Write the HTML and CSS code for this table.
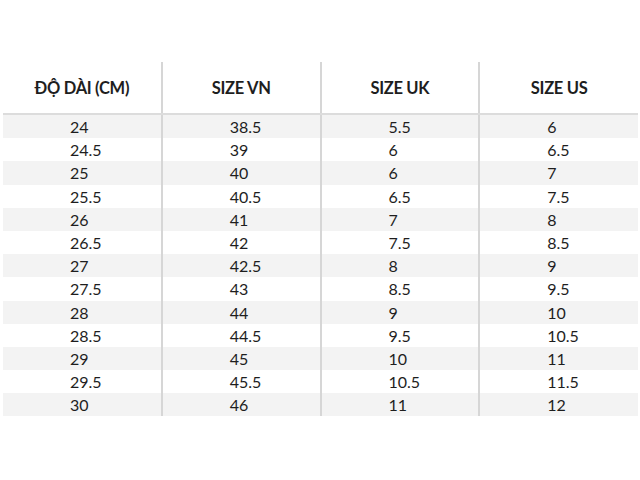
FILE: index.html
```html
<!DOCTYPE html>
<html lang="vi">
<head>
<meta charset="utf-8">
<link rel="stylesheet" href="styles.css">
</head>
<body>
<div class="wrap">
<table class="size-table">
  <thead>
    <tr><th>ĐỘ DÀI (CM)</th><th>SIZE VN</th><th>SIZE UK</th><th>SIZE US</th></tr>
  </thead>
  <tbody>
    <tr><td>24</td><td>38.5</td><td>5.5</td><td>6</td></tr>
    <tr><td>24.5</td><td>39</td><td>6</td><td>6.5</td></tr>
    <tr><td>25</td><td>40</td><td>6</td><td>7</td></tr>
    <tr><td>25.5</td><td>40.5</td><td>6.5</td><td>7.5</td></tr>
    <tr><td>26</td><td>41</td><td>7</td><td>8</td></tr>
    <tr><td>26.5</td><td>42</td><td>7.5</td><td>8.5</td></tr>
    <tr><td>27</td><td>42.5</td><td>8</td><td>9</td></tr>
    <tr><td>27.5</td><td>43</td><td>8.5</td><td>9.5</td></tr>
    <tr><td>28</td><td>44</td><td>9</td><td>10</td></tr>
    <tr><td>28.5</td><td>44.5</td><td>9.5</td><td>10.5</td></tr>
    <tr><td>29</td><td>45</td><td>10</td><td>11</td></tr>
    <tr><td>29.5</td><td>45.5</td><td>10.5</td><td>11.5</td></tr>
    <tr><td>30</td><td>46</td><td>11</td><td>12</td></tr>
  </tbody>
</table>
</div>
</body>
</html>
```

FILE: styles.css
```css
html, body {
  margin: 0;
  padding: 0;
  background: #ffffff;
}
.wrap {
  padding: 62px 2px 0 3px;
}
.size-table {
  width: 635px;
  border-collapse: collapse;
  table-layout: fixed;
  font-family: "Lato", "Inter", "Liberation Sans", sans-serif;
  color: #1e1e1e;
}
.size-table th {
  height: 51px;
  font-size: 16.5px;
  font-weight: 700;
  text-align: center;
  vertical-align: middle;
  padding: 0;
  border-bottom: 2px solid #dcdcdc;
  letter-spacing: -0.3px;
}
.size-table th + th,
.size-table td + td {
  border-left: 2px solid #d6d6d6;
}
.size-table td {
  height: 23.2px;
  padding: 0 0 0 67px;
  font-size: 16px;
  line-height: 23px;
  text-align: left;
}
.size-table tbody tr:nth-child(odd) td {
  background: #f3f3f3;
}
```
